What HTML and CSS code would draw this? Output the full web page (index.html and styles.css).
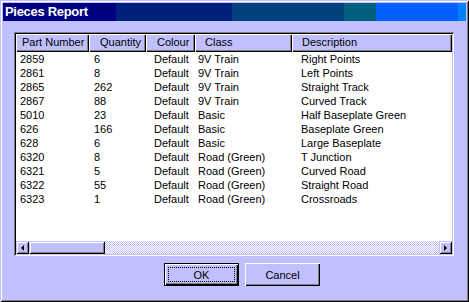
FILE: index.html
```html
<!DOCTYPE html>
<html>
<head>
<meta charset="utf-8">
<link rel="stylesheet" href="styles.css">
</head>
<body>
<div class="window">
  <div class="titlebar"><span class="title">Pieces Report</span></div>
  <div class="body">
    <div class="listview">
      <div class="header">
        <div class="hcell c1">Part Number</div>
        <div class="hcell c2">Quantity</div>
        <div class="hcell c3">Colour</div>
        <div class="hcell c4">Class</div>
        <div class="hcell c5">Description</div>
      </div>
      <div class="rows">
        <div class="row"><span>2859</span><span>6</span><span>Default</span><span>9V Train</span><span>Right Points</span></div>
        <div class="row"><span>2861</span><span>8</span><span>Default</span><span>9V Train</span><span>Left Points</span></div>
        <div class="row"><span>2865</span><span>262</span><span>Default</span><span>9V Train</span><span>Straight Track</span></div>
        <div class="row"><span>2867</span><span>88</span><span>Default</span><span>9V Train</span><span>Curved Track</span></div>
        <div class="row"><span>5010</span><span>23</span><span>Default</span><span>Basic</span><span>Half Baseplate Green</span></div>
        <div class="row"><span>626</span><span>166</span><span>Default</span><span>Basic</span><span>Baseplate Green</span></div>
        <div class="row"><span>628</span><span>6</span><span>Default</span><span>Basic</span><span>Large Baseplate</span></div>
        <div class="row"><span>6320</span><span>8</span><span>Default</span><span>Road (Green)</span><span>T Junction</span></div>
        <div class="row"><span>6321</span><span>5</span><span>Default</span><span>Road (Green)</span><span>Curved Road</span></div>
        <div class="row"><span>6322</span><span>55</span><span>Default</span><span>Road (Green)</span><span>Straight Road</span></div>
        <div class="row"><span>6323</span><span>1</span><span>Default</span><span>Road (Green)</span><span>Crossroads</span></div>
      </div>
      <div class="hscroll">
        <div class="sbtn"><span class="arrow-left"></span></div>
        <div class="thumb"></div>
        <div class="track"></div>
        <div class="sbtn"><span class="arrow-right"></span></div>
      </div>
    </div>
    <div class="buttons">
      <button class="btn default"><span class="focus">OK</span></button>
      <button class="btn">Cancel</button>
    </div>
  </div>
</div>
</body>
</html>
```
FILE: styles.css
```css
html, body {
  margin: 0;
  padding: 0;
  background: #c0c0ff;
}
.window {
  width: 469px;
  height: 302px;
  box-sizing: border-box;
  padding: 3px;
  background: #c0c0ff;
  box-shadow: inset 1px 1px #c0c0ff, inset -1px -1px #000, inset 2px 2px #fff, inset -2px -2px #808080;
  font-family: "Liberation Sans", Arial, sans-serif;
  font-size: 11px;
  color: #000;
}
.titlebar {
  height: 18px;
  display: flex;
  align-items: center;
  padding-left: 2px;
  background: linear-gradient(to right,
    #000080 0, #000080 113px,
    #00207c 113px, #00207c 229px,
    #00407c 229px, #00407c 341px,
    #006080 341px, #006080 373px,
    #0060ff 373px, #0060ff 455px,
    #0080ff 455px, #0080ff 100%);
}
.title {
  color: #fff;
  font-weight: bold;
  font-size: 13px;
  letter-spacing: -0.3px;
  line-height: 18px;
}
.body {
  padding: 11px 0 0 11px;
}
.listview {
  width: 440px;
  height: 224px;
  box-sizing: border-box;
  padding: 2px;
  background: #fff;
  box-shadow: inset 1px 1px #808080, inset -1px -1px #fff, inset 2px 2px #000, inset -2px -2px #c0c0ff;
  display: flex;
  flex-direction: column;
}
.header {
  display: flex;
  height: 18px;
  flex: none;
}
.hcell {
  box-sizing: border-box;
  height: 18px;
  line-height: 17px;
  background: #c0c0ff;
  box-shadow: inset 1px 1px #fff, inset -1px -1px #000, inset -2px -2px #808080;
  white-space: nowrap;
}
.c1 { width: 73px; padding-left: 6px; }
.c2 { width: 57px; padding-left: 11px; }
.c3 { width: 49px; padding-left: 11px; }
.c4 { width: 97px; padding-left: 10px; }
.c5 { width: 160px; padding-left: 10px; }
.rows {
  flex: 1;
  overflow: hidden;
}
.row {
  display: grid;
  grid-template-columns: 74px 60px 44px 103px auto;
  padding-left: 4px;
  height: 14px;
  line-height: 14px;
  white-space: nowrap;
}
.hscroll {
  flex: none;
  height: 13px;
  display: flex;
}
.sbtn {
  width: 13px;
  height: 13px;
  box-sizing: border-box;
  background: #c0c0ff;
  box-shadow: inset 1px 1px #c0c0ff, inset -1px -1px #000, inset 2px 2px #fff, inset -2px -2px #808080;
  display: flex;
  align-items: center;
  justify-content: center;
}
.arrow-left {
  width: 0;
  height: 0;
  border-top: 3px solid transparent;
  border-bottom: 3px solid transparent;
  border-right: 3px solid #000;
  margin-left: -1px;
}
.arrow-right {
  width: 0;
  height: 0;
  border-top: 3px solid transparent;
  border-bottom: 3px solid transparent;
  border-left: 3px solid #000;
}
.thumb {
  width: 76px;
  height: 13px;
  box-sizing: border-box;
  background: #c0c0ff;
  box-shadow: inset 1px 1px #c0c0ff, inset -1px -1px #000, inset 2px 2px #fff, inset -2px -2px #808080;
}
.track {
  flex: 1;
  background: repeating-conic-gradient(#fff 0 25%, #c0c0ff 0 50%) 0 0 / 2px 2px;
}
.buttons {
  display: flex;
  gap: 6px;
  margin-top: 7px;
  margin-left: 150px;
}
.btn {
  width: 75px;
  height: 23px;
  box-sizing: border-box;
  border: none;
  padding: 0;
  background: #c0c0ff;
  font-family: "Liberation Sans", Arial, sans-serif;
  font-size: 11px;
  color: #000;
  box-shadow: inset 1px 1px #fff, inset -1px -1px #000, inset -2px -2px #808080;
  display: flex;
  align-items: center;
  justify-content: center;
}
.btn.default {
  box-shadow: inset 0 0 0 1px #000, inset 2px 2px #fff, inset -2px -2px #000, inset -3px -3px #808080;
  position: relative;
}
.focus::after {
  content: "";
  position: absolute;
  left: 4px;
  top: 4px;
  right: 4px;
  bottom: 4px;
  border: 1px dotted #000;
}
```
